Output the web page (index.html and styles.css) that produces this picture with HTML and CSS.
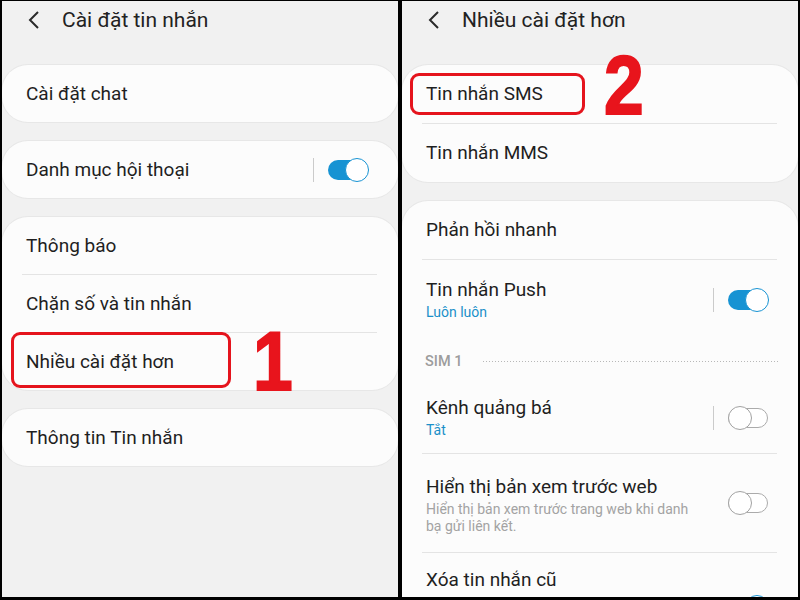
FILE: index.html
```html
<!doctype html>
<html>
    <head>
        <meta charset="utf-8">
        <title>Cài đặt tin nhắn</title>
        <link rel="stylesheet" href="styles.css">
    </head>
    <body>
        <div class="shots">
            <!-- man hinh 1 -->
            <section class="screen">
                <header class="bar">
                    <svg class="back" width="12" height="18" viewBox="0 0 12 18"><path d="M10 1 L2 9 L10 17" fill="none" stroke="#2a2a2a" stroke-width="2"/></svg>
                    <h1 class="title">Cài đặt tin nhắn</h1>
                </header>
                <div class="list">
                    <div class="card">
                        <div class="row"><span class="label">Cài đặt chat</span></div>
                    </div>
                    <div class="card">
                        <div class="row">
                            <span class="label">Danh mục hội thoại</span>
                            <span class="sep"></span>
                            <span class="switch on"></span>
                        </div>
                    </div>
                    <div class="card">
                        <div class="row"><span class="label">Thông báo</span></div>
                        <div class="rule"></div>
                        <div class="row"><span class="label">Chặn số và tin nhắn</span></div>
                        <div class="rule"></div>
                        <div class="row">
                            <span class="label">Nhiều cài đặt hơn</span>
                            <span class="ring ring-1"></span>
                            <span class="step step-1">1</span>
                        </div>
                    </div>
                    <div class="card">
                        <div class="row"><span class="label">Thông tin Tin nhắn</span></div>
                    </div>
                </div>
            </section>

            <!-- man hinh 2 -->
            <section class="screen more">
                <header class="bar">
                    <svg class="back" width="12" height="18" viewBox="0 0 12 18"><path d="M10 1 L2 9 L10 17" fill="none" stroke="#2a2a2a" stroke-width="2"/></svg>
                    <h1 class="title">Nhiều cài đặt hơn</h1>
                </header>
                <div class="list">
                    <div class="card">
                        <div class="row">
                            <span class="label">Tin nhắn SMS</span>
                            <span class="ring ring-2"></span>
                            <span class="step step-2">2</span>
                        </div>
                        <div class="rule"></div>
                        <div class="row"><span class="label">Tin nhắn MMS</span></div>
                    </div>
                    <div class="card">
                        <div class="row"><span class="label">Phản hồi nhanh</span></div>
                        <div class="rule"></div>
                        <div class="row tall">
                            <div class="text">
                                <span class="label">Tin nhắn Push</span>
                                <span class="sub">Luôn luôn</span>
                            </div>
                            <span class="sep"></span>
                            <span class="switch on"></span>
                        </div>
                        <div class="group">
                            <span class="group-name">SIM 1</span>
                            <span class="dots"></span>
                        </div>
                        <div class="row mid">
                            <div class="text">
                                <span class="label">Kênh quảng bá</span>
                                <span class="sub">Tắt</span>
                            </div>
                            <span class="sep"></span>
                            <span class="switch off"></span>
                        </div>
                        <div class="rule"></div>
                        <div class="row big">
                            <div class="text">
                                <span class="label">Hiển thị bản xem trước web</span>
                                <span class="desc">Hiển thị bản xem trước trang web khi danh bạ gửi liên kết.</span>
                            </div>
                            <span class="switch off"></span>
                        </div>
                        <div class="rule"></div>
                        <div class="row last">
                            <div class="text">
                                <span class="label">Xóa tin nhắn cũ</span>
                            </div>
                            <span class="switch on"></span>
                        </div>
                    </div>
                </div>
            </section>
        </div>
    </body>
</html>
```

FILE: styles.css
```css
html, body{
    margin: 0;
    height: 100%;
}
body{
    background: #000;
    font-family: Roboto, "Noto Sans", sans-serif;
    color: #1f1f1f;
}
.shots{
    display: flex;
    gap: 4px;
    padding: 1px 2px 3px 2px;
    height: 596px;
}
.screen{
    flex: 1;
    background: #f1f1f1;
    overflow: hidden;
}

/* thanh tieu de */
.bar{
    height: 38px;
    margin-bottom: 26px;
    display: flex;
    align-items: center;
    padding-left: 26px;
}
.back{
    flex: none;
}
.title{
    margin: 0 0 0 22px;
    font-size: 21px;
    font-weight: 400;
    color: #222;
}

.list{
    display: flex;
    flex-direction: column;
    gap: 19px;
}
.card{
    background: #fcfcfc;
    border-radius: 26px;
    box-shadow: 0 0 0 1px #e7e7e7;
}
.row{
    position: relative;
    display: flex;
    align-items: center;
    min-height: 57px;
    padding: 0 29px 0 24px;
    box-sizing: border-box;
    font-size: 19px;
}
.more .row{ min-height: 58px; }
.more .row.tall{ min-height: 80px; }
.more .row.mid { min-height: 71px; }
.more .row.big { min-height: 98px; }
.row.big .text{
    align-self: flex-start;
    padding-top: 21px;
}
.more .row.last{
    align-items: flex-start;
    min-height: 110px;
    padding-top: 15px;
}
.row.last .switch{ margin-top: 27px; }

.rule{
    height: 1px;
    margin: 0 21px 0 20px;
    background: #e4e4e4;
}
.label{
    flex: 1;
    line-height: 24px;
}
.text{
    flex: 1;
    display: flex;
    flex-direction: column;
}
.sub{
    font-size: 14px;
    line-height: 20px;
    color: #1a90c9;
}
.desc{
    max-width: 276px;
    margin-top: 2px;
    font-size: 14px;
    line-height: 17px;
    color: #a3a3a3;
}

/* nhom SIM */
.group{
    display: flex;
    align-items: center;
    height: 42px;
    padding: 0 20px 0 23px;
}
.group-name{
    font-size: 14.5px;
    font-weight: 500;
    color: #9d9d9d;
}
.dots{
    flex: 1;
    height: 1px;
    margin-left: 21px;
    background-image: linear-gradient(to right, #b8b8b8 1px, transparent 1px);
    background-size: 3px 1px;
}

/* cong tac */
.sep{
    width: 1px;
    height: 24px;
    margin-right: 14px;
    background: #cbcbcb;
}
.switch{
    position: relative;
    flex: none;
    width: 41px;
    height: 24px;
}
.switch::before{
    content: "";
    position: absolute;
    left: 0;
    right: 1px;
    top: 2px;
    bottom: 2px;
    border-radius: 10px;
    background: #1793d3;
}
.switch::after{
    content: "";
    position: absolute;
    right: 0;
    top: 0;
    width: 24px;
    height: 24px;
    box-sizing: border-box;
    border-radius: 50%;
    background: #fff;
    border: 1.5px solid #1793d3;
}
.switch.off::before{
    background: #fff;
    box-sizing: border-box;
    border: 1.5px solid #ababab;
}
.switch.off::after{
    right: auto;
    left: 0;
    border-color: #a2a2a2;
}

/* danh dau mau do */
.ring{
    position: absolute;
    border: 3px solid #e5141d;
    border-radius: 9px;
    box-sizing: border-box;
}
.ring-1{
    left: 9px;
    top: -1px;
    width: 220px;
    height: 56px;
}
.ring-2{
    left: 8px;
    top: 8px;
    width: 175px;
    height: 42px;
}
.step{
    position: absolute;
    font-family: "Liberation Sans", Arial, sans-serif;
    font-weight: 700;
    font-size: 84px;
    line-height: 1;
    color: #e8141c;
    -webkit-text-stroke: 2px #e8141c;
    transform: scaleX(0.85);
    transform-origin: left top;
}
.step-1{
    left: 251px;
    top: -14px;
}
.step-2{
    left: 202px;
    top: -22px;
}
```
